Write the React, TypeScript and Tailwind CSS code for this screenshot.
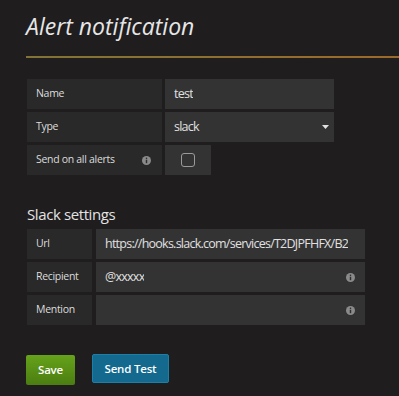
import { ReactNode } from 'react';

function InfoIcon() {
  return (
    <svg width="9" height="9" viewBox="0 0 10 10" className="shrink-0">
      <circle cx="5" cy="5" r="5" fill="#8a8a8a" />
      <rect x="4.2" y="4.2" width="1.6" height="3.8" fill="#2e2e2e" />
      <circle cx="5" cy="2.6" r="0.9" fill="#2e2e2e" />
    </svg>
  );
}

function Label({ width, children, info }: { width: string; children: ReactNode; info?: boolean }) {
  return (
    <div className={`${width} h-[30px] bg-[#292929] flex items-center justify-between pl-[9px] pr-[11px] text-[10.5px] tracking-[-0.3px] text-[#dcdcdc]`}>
      <span>{children}</span>
      {info && <InfoIcon />}
    </div>
  );
}

function Field({ width, children, info }: { width: string; children?: ReactNode; info?: boolean }) {
  return (
    <div className={`${width} h-[30px] bg-[#333333] flex items-center justify-between pl-[9px] pr-[10px] text-[12.5px] tracking-[-0.75px] text-[#e0e0e0] overflow-hidden`}>
      <span className="whitespace-nowrap overflow-hidden">{children}</span>
      {info && <InfoIcon />}
    </div>
  );
}

export default function App() {
  return (
    <div
      className="w-[399px] h-[396px] bg-[#1f1d1e] overflow-hidden"
      style={{ fontFamily: '"Open Sans", "Liberation Sans", sans-serif' }}
    >
      <div className="pl-[26px] pt-[11px]">
        <h1 className="text-[23px] italic font-normal leading-[30px] text-[#e6e6e6]">Alert notification</h1>
      </div>
      <div className="ml-[26px] mt-[15px] h-[2px] bg-gradient-to-r from-[#7f7436] to-[#9c6a2a]" />

      <div className="pl-[27px] pt-[21px] flex flex-col gap-[3px]">
        <div className="flex gap-[3px]">
          <Label width="w-[135px]">Name</Label>
          <Field width="w-[169px]">test</Field>
        </div>
        <div className="flex gap-[3px]">
          <Label width="w-[135px]">Type</Label>
          <div className="w-[169px] h-[30px] bg-[#333333] flex items-center justify-between pl-[9px] pr-[5px] text-[12.5px] tracking-[-0.75px] text-[#e0e0e0]">
            <span>slack</span>
            <svg width="7" height="4" viewBox="0 0 7 4">
              <path d="M0 0 H7 L3.5 4 Z" fill="#e0e0e0" />
            </svg>
          </div>
        </div>
        <div className="flex gap-[3px]">
          <Label width="w-[135px]" info>Send on all alerts</Label>
          <div className="w-[46px] h-[30px] bg-[#333333] flex items-center justify-center">
            <div className="w-[14px] h-[14px] rounded-[3px] border border-[#9a9a9a]" />
          </div>
        </div>
      </div>

      <h2 className="pl-[27px] pt-[28px] text-[15px] leading-[22px] tracking-[-0.4px] text-[#e3e3e3]">Slack settings</h2>

      <div className="pl-[27px] pt-[4px] flex flex-col gap-[3px]">
        <div className="flex gap-[4px]">
          <Label width="w-[65px]">Url</Label>
          <Field width="w-[269px]">https://hooks.slack.com/services/T2DJPFHFX/B2</Field>
        </div>
        <div className="flex gap-[4px]">
          <Label width="w-[65px]">Recipient</Label>
          <Field width="w-[269px]" info>@xxxxx</Field>
        </div>
        <div className="flex gap-[4px]">
          <Label width="w-[65px]">Mention</Label>
          <Field width="w-[269px]" info />
        </div>
      </div>

      <div className="pl-[26px] pt-[29px] flex items-start gap-[17px]">
        <button className="mt-[1px] w-[49px] h-[30px] rounded-[2px] bg-gradient-to-b from-[#66a31a] to-[#4b7d12] text-white text-[11.5px] tracking-[-0.2px] font-semibold">
          Save
        </button>
        <button className="w-[77px] h-[29px] rounded-[2px] bg-[#14698f] border border-[#1c7fa8] text-white text-[11.5px] tracking-[-0.2px] font-semibold">
          Send Test
        </button>
      </div>
    </div>
  );
}
